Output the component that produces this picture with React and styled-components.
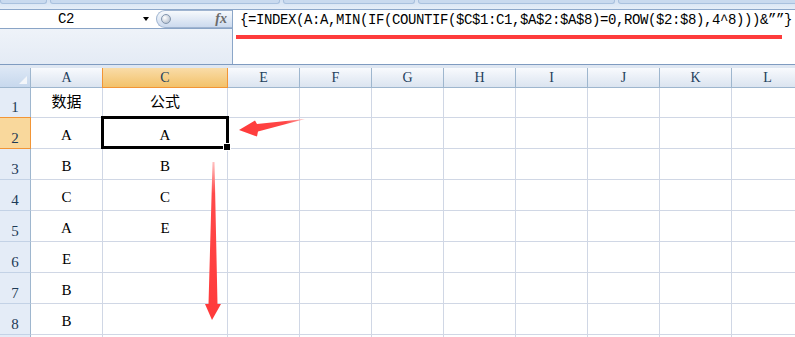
import React from "react";
import styled, { createGlobalStyle } from "styled-components";

const MONO = `"Liberation Mono", "Noto Sans CJK SC", monospace`;
const SERIF = `"Liberation Serif", "Noto Sans CJK SC", serif`;

const GlobalStyle = createGlobalStyle`
  html, body { margin: 0; padding: 0; background: #fff; overflow: hidden; }
  #root { width: 795px; height: 337px; }
  * { box-sizing: border-box; }
`;

const Root = styled.div`
  position: relative;
  width: 795px;
  height: 337px;
  overflow: hidden;
  background: #fff;
  font-family: ${MONO};
  color: #000;
`;

const Ribbon = styled.div`
  height: 10px;
  border-bottom: 1px solid #8da8cb;
  background: linear-gradient(#d3e1f2, #e6eef8);
  display: flex;
  gap: 3px;
  align-items: flex-start;
`;

const RibbonGroup = styled.div`
  flex-shrink: 0;
  width: ${(p) => p.$w}px;
  height: 4px;
  border: 1px solid #a9c1de;
  border-top: none;
  border-radius: 0 0 3px 3px;
  background: #c9daef;
`;

const FormulaBar = styled.div`
  display: flex;
  height: 55px;
  border-bottom: 1px solid #7f9bc0;
`;

const LeftPane = styled.div`
  width: 232px;
  display: flex;
  flex-direction: column;
  background: linear-gradient(#f4f7fb, #e4ebf5);
`;

const NameRow = styled.div`
  height: 19px;
  border-bottom: 1px solid #8aa4c6;
  display: flex;
  align-items: center;
  background: #fff;
`;

const NameText = styled.div`
  width: 132px;
  text-align: center;
  font-size: 14px;
  letter-spacing: -0.4px;
  line-height: 18px;
`;

const DropArrow = styled.div`
  margin-left: 11px;
  width: 0;
  height: 0;
  border-left: 3px solid transparent;
  border-right: 3px solid transparent;
  border-top: 4px solid #000;
`;

const Pill = styled.div`
  margin-left: auto;
  width: 76px;
  height: 18px;
  border: 1px solid #9fb4d0;
  border-right: none;
  border-radius: 9px 0 0 9px;
  background: linear-gradient(#f6f9fc, #ccdaee);
  display: flex;
  align-items: center;
  padding: 0 5px 0 4px;
`;

const Grip = styled.div`
  width: 10px;
  height: 10px;
  border-radius: 50%;
  background: radial-gradient(circle at 35% 35%, #ffffff, #a3b1c4);
  border: 1px solid #8295ad;
`;

const Fx = styled.span`
  margin-left: auto;
  font-family: "Liberation Serif", serif;
  font-style: italic;
  font-weight: bold;
  font-size: 14px;
  line-height: 14px;
  color: #6b6b6b;
`;

const FormulaBox = styled.div`
  flex: 1;
  background: #fff;
  border-left: 1px solid #8ba6c8;
  padding: 2px 0 0 7px;
  font-size: 14px;
  letter-spacing: -0.4px;
  line-height: 16px;
  white-space: nowrap;
  overflow: hidden;
`;

const Spacer = styled.div`
  height: 3px;
  background: #dfe7f2;
`;

const Sheet = styled.div`
  display: grid;
  grid-template-columns: 31px 72px 125px repeat(8, 72px);
  grid-template-rows: 20px 30px repeat(8, 31px);
  font-family: ${SERIF};
`;

const Corner = styled.div`
  position: relative;
  background: linear-gradient(#dce7f5, #c7d8ed);
  border-right: 1px solid #9eb6ce;
  border-bottom: 1px solid #9eb6ce;
  &::after {
    content: "";
    position: absolute;
    right: 3px;
    bottom: 3px;
    width: 0;
    height: 0;
    border-left: 8px solid transparent;
    border-bottom: 8px solid #f3f6fa;
  }
`;

const ColHead = styled.div`
  display: flex;
  align-items: center;
  justify-content: center;
  font-size: 14px;
  color: #23405c;
  border-right: 1px solid ${(p) => (p.$active ? "#f29536" : "#9eb6ce")};
  border-bottom: 1px solid ${(p) => (p.$active ? "#f29536" : "#9eb6ce")};
  background: ${(p) =>
    p.$active
      ? "linear-gradient(#f9dca8, #f3c26a)"
      : "linear-gradient(#f8fafd, #dbe4f0)"};
  box-shadow: ${(p) => (p.$active ? "-1px 0 0 #f29536" : "none")};
`;

const RowHead = styled.div`
  display: flex;
  align-items: flex-end;
  justify-content: center;
  font-size: 15px;
  line-height: 15px;
  padding-bottom: 2px;
  color: #1d3a56;
  background: ${(p) => (p.$active ? "#f9d89c" : "#e4ecf7")};
  border-right: 1px solid ${(p) => (p.$active ? "#f29536" : "#9eb6ce")};
  border-bottom: 1px solid ${(p) => (p.$active ? "#f29536" : "#c3d2e6")};
  box-shadow: ${(p) => (p.$active ? "0 -1px 0 #f29536" : "none")};
`;

const Cell = styled.div`
  position: relative;
  display: flex;
  align-items: flex-end;
  justify-content: center;
  font-size: 15px;
  line-height: 16px;
  padding-bottom: ${(p) => (p.$title ? 7 : 5)}px;
  border-right: 1px solid #d0d7e5;
  border-bottom: 1px solid #d0d7e5;
  ${(p) =>
    p.$selected &&
    `
    &::after {
      content: "";
      position: absolute;
      top: -2px;
      left: -2px;
      right: -2px;
      bottom: -1px;
      border: 3px solid #000;
      z-index: 2;
    }
  `}
`;

const Handle = styled.span`
  position: absolute;
  right: -3px;
  bottom: -2px;
  width: 6px;
  height: 6px;
  background: #000;
  box-shadow: 0 0 0 1px #fff;
  z-index: 3;
`;

const Overlay = styled.svg`
  position: absolute;
  top: 0;
  left: 0;
  z-index: 10;
  pointer-events: none;
`;

const columns = ["A", "C", "E", "F", "G", "H", "I", "J", "K", "L"];
const data = [
  ["数据", "公式"],
  ["A", "A"],
  ["B", "B"],
  ["C", "C"],
  ["A", "E"],
  ["E", ""],
  ["B", ""],
  ["B", ""],
  ["", ""],
];

const formula = "{=INDEX(A:A,MIN(IF(COUNTIF($C$1:C1,$A$2:$A$8)=0,ROW($2:$8),4^8)))&\u201D\u201D}";

export default function App() {
  return (
    <Root>
      <GlobalStyle />
      <Ribbon>
        {[47, 230, 132, 197, 200].map((w, i) => (
          <RibbonGroup key={i} $w={w} />
        ))}
      </Ribbon>
      <FormulaBar>
        <LeftPane>
          <NameRow>
            <NameText>C2</NameText>
            <DropArrow />
            <Pill>
              <Grip />
              <Fx>fx</Fx>
            </Pill>
          </NameRow>
        </LeftPane>
        <FormulaBox>{formula}</FormulaBox>
      </FormulaBar>
      <Spacer />
      <Sheet>
        <Corner />
        {columns.map((c) => (
          <ColHead key={c} $active={c === "C"}>
            {c}
          </ColHead>
        ))}
        {data.map((row, r) => (
          <React.Fragment key={r}>
            <RowHead $active={r === 1}>{r < 8 ? r + 1 : ""}</RowHead>
            {columns.map((c, ci) => {
              const selected = r === 1 && c === "C";
              return (
                <Cell key={c} $title={r === 0} $selected={selected}>
                  {ci < 2 ? row[ci] : ""}
                  {selected && <Handle />}
                </Cell>
              );
            })}
          </React.Fragment>
        ))}
      </Sheet>
      <Overlay width="795" height="337" viewBox="0 0 795 337">
        <defs>
          <linearGradient id="fadeLeft" x1="305" y1="0" x2="239" y2="0" gradientUnits="userSpaceOnUse">
            <stop offset="0" stopColor="#ffb0b0" />
            <stop offset="0.3" stopColor="#ff4646" />
            <stop offset="1" stopColor="#ff3a3a" />
          </linearGradient>
          <linearGradient id="fadeDown" x1="0" y1="162" x2="0" y2="320" gradientUnits="userSpaceOnUse">
            <stop offset="0" stopColor="#ffc0c0" />
            <stop offset="0.2" stopColor="#ff4a4a" />
            <stop offset="1" stopColor="#ff3a3a" />
          </linearGradient>
        </defs>
        <rect x="236" y="35" width="546" height="4" fill="#fe3c3c" />
        <polygon
          points="239,130 255,120.5 257,124 305,119 258,131.5 257,136.5"
          fill="url(#fadeLeft)"
        />
        <polygon
          points="212.5,162 214.5,162 217.5,304 221,304 212,320 205,304 208.5,304"
          fill="url(#fadeDown)"
        />
      </Overlay>
    </Root>
  );
}
